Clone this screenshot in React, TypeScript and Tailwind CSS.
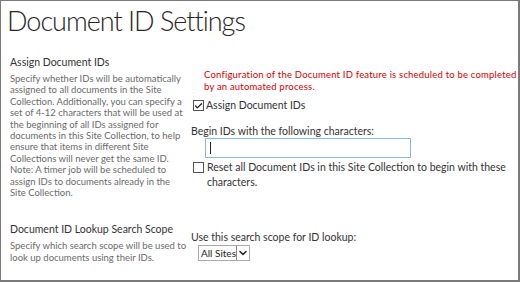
import { ChevronDown, Check } from "lucide-react";

const font = { fontFamily: 'Lato, "Liberation Sans", sans-serif' };

const assignHelp = [
  "Specify whether IDs will be automatically",
  "assigned to all documents in the Site",
  "Collection. Additionally, you can specify a",
  "set of 4-12 characters that will be used at",
  "the beginning of all IDs assigned for",
  "documents in this Site Collection, to help",
  "ensure that items in different Site",
  "Collections will never get the same ID.",
  "Note: A timer job will be scheduled to",
  "assign IDs to documents already in the",
  "Site Collection.",
];

function Box({ checked }: { checked?: boolean }) {
  return (
    <span className="flex h-[11px] w-[11px] shrink-0 items-center justify-center border border-[#555] bg-white">
      {checked && <Check size={10} strokeWidth={3.5} className="text-[#222]" />}
    </span>
  );
}

export default function App() {
  return (
    <div
      style={font}
      className="h-[282px] w-[520px] overflow-hidden border-l border-t border-r-2 border-b-2 border-[#7a7a7a] bg-white text-[#444]"
    >
      {/* Title */}
      <h1 className="pl-[6px] pt-[3px] text-[27px] font-light leading-[34px] tracking-[-1px] text-[#262626]">
        Document ID Settings
      </h1>

      {/* Assign section */}
      <div className="mt-[17px] flex">
        <div className="w-[180px] shrink-0 whitespace-nowrap pl-[9px]">
          <div className="text-[10.5px] leading-[14px] text-[#333]">Assign Document IDs</div>
          <p className="mt-[4px] text-[9.5px] leading-[11.4px] text-[#6a6a6a]">
            {assignHelp.map((l) => (
              <span key={l} className="block">
                {l}
              </span>
            ))}
          </p>
        </div>
        <div className="min-w-0 flex-1 whitespace-nowrap pl-[10px] pt-[14px]">
          <p className="pl-[13px] text-[9.5px] leading-[12px] tracking-[0.2px] text-[#d40000]">
            Configuration of the Document ID feature is scheduled to be completed
            <br />
            by an automated process.
          </p>
          <label className="mt-[6px] flex items-center gap-[2px] pl-[2px] text-[10.5px] leading-[13px] text-[#333]">
            <Box checked />
            Assign Document IDs
          </label>
          <div className="mt-[13px] text-[10.5px] leading-[13px] text-[#333]">
            Begin IDs with the following characters:
          </div>
          <div className="ml-[14px] mt-0 flex h-[20px] w-[206px] items-center border border-[#8ab8e6] pl-[4px]">
            <span className="h-[12px] w-px bg-[#222]" />
          </div>
          <label className="mt-[2px] flex items-start gap-[3px] pl-[2px] text-[10.5px] leading-[15px] text-[#333]">
            <span className="mt-[2px]">
              <Box />
            </span>
            <span>
              Reset all Document IDs in this Site Collection to begin with these
              <br />
              characters.
            </span>
          </label>
        </div>
      </div>

      {/* Lookup section */}
      <div className="mt-[24px] flex">
        <div className="w-[180px] shrink-0 whitespace-nowrap pl-[9px]">
          <div className="text-[10.5px] leading-[14px] text-[#333]">Document ID Lookup Search Scope</div>
          <p className="mt-[4px] text-[9.5px] leading-[12px] text-[#6a6a6a]">
            Specify which search scope will be used to
            <br />
            look up documents using their IDs.
          </p>
        </div>
        <div className="flex-1 pl-[10px] pt-[9px]">
          <div className="text-[10.5px] leading-[13px] text-[#333]">
            Use this search scope for ID lookup:
          </div>
          <div className="ml-[7px] mt-[1px] flex h-[16px] w-[52px] items-center border border-[#aaa] text-[10px] text-[#222]">
            <span className="flex-1 whitespace-nowrap pl-[2px] leading-none">All Sites</span>
            <span className="flex h-[14px] w-[13px] items-center justify-center border-l border-[#888]">
              <ChevronDown size={12} strokeWidth={3} className="text-[#222]" />
            </span>
          </div>
        </div>
      </div>
    </div>
  );
}
